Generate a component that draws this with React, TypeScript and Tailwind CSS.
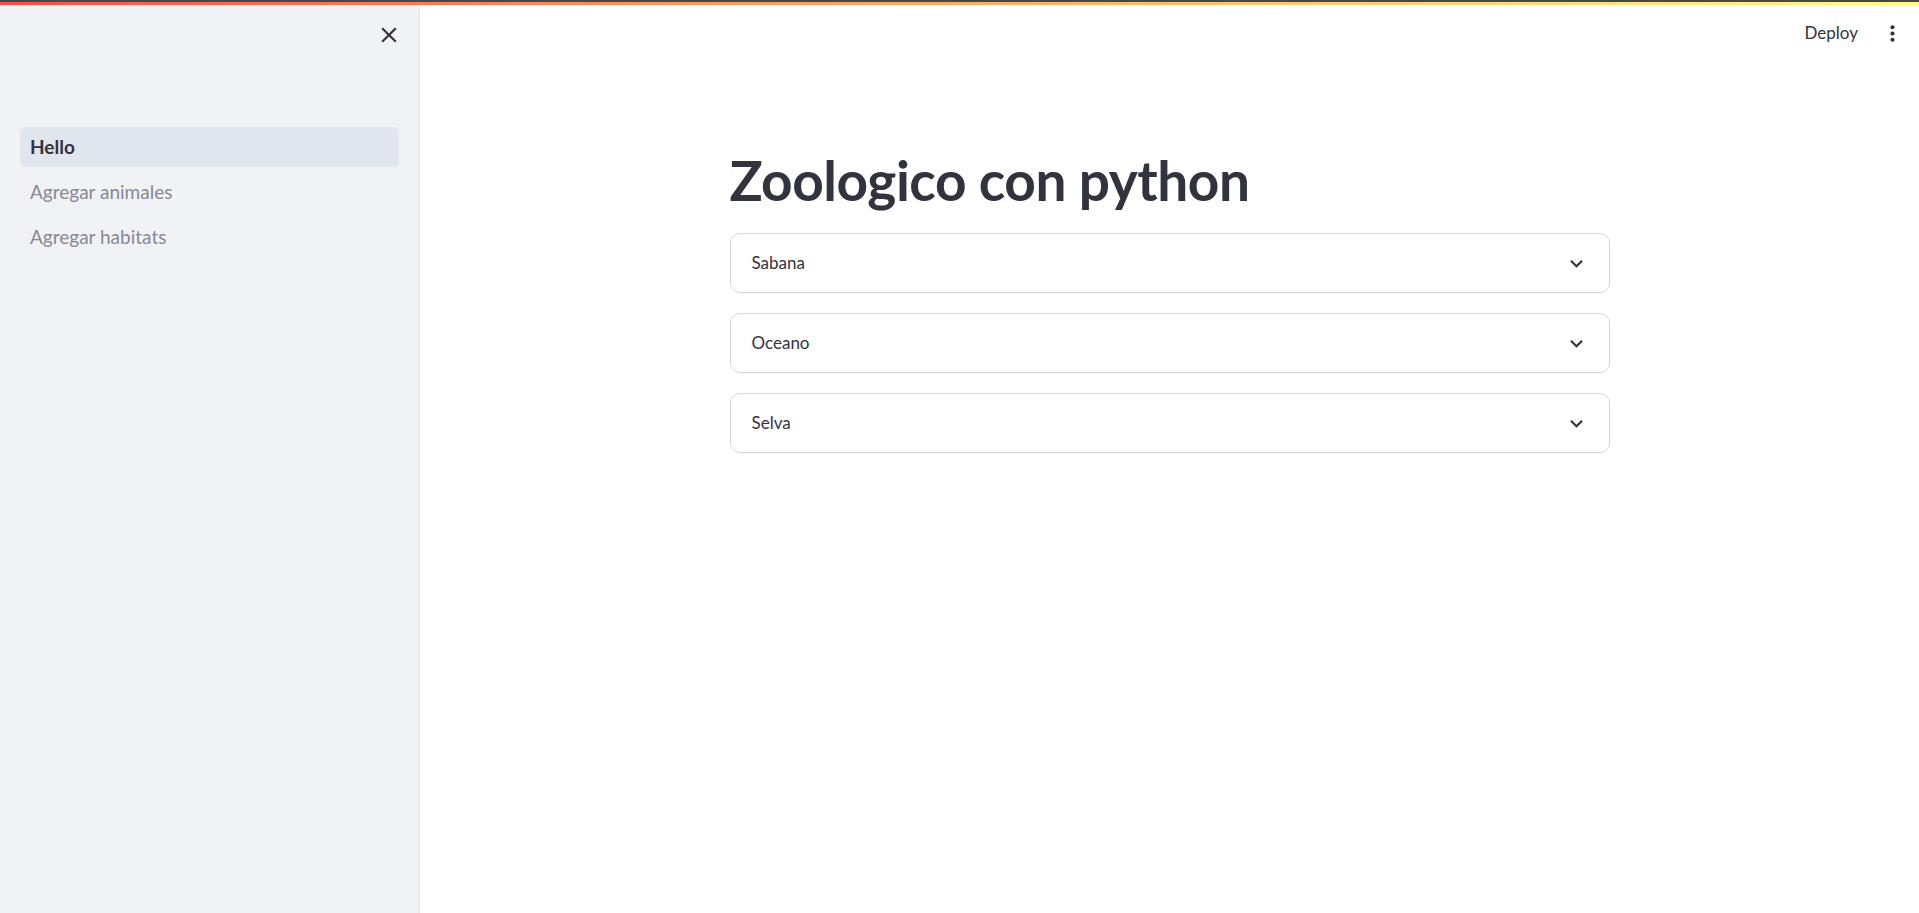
import type React from "react"

const Chevron: React.FC = () => (
  <svg viewBox="0 0 24 24" className="w-[25px] h-[25px] fill-[#31333f]">
    <path d="M16.59 8.59L12 13.17 7.41 8.59 6 10l6 6 6-6z" />
  </svg>
)

const habitats = ["Sabana", "Oceano", "Selva"]

const App: React.FC = () => {
  return (
    <div className="h-[913px] flex flex-col font-['Lato',sans-serif] text-[#31333f] overflow-hidden">
      <div className="h-[2px] bg-[#474747]" />
      <div className="h-[3px] bg-gradient-to-r from-[#ff4b4b] to-[#fffd80]" />
      <div className="flex flex-1 min-h-0">
        {/* sidebar */}
        <aside className="w-[420px] shrink-0 bg-[#f0f2f6] border-r border-[#e6e8ee] flex flex-col">
          <div className="flex justify-end pr-[17px] pt-[17px]">
            <svg viewBox="0 0 24 24" className="w-[26px] h-[26px] fill-[#31333f]">
              <path d="M19 6.41L17.59 5 12 10.59 6.41 5 5 6.41 10.59 12 5 17.59 6.41 19 12 13.41 17.59 19 19 17.59 13.41 12z" />
            </svg>
          </div>
          <nav className="mt-[79px] px-[20px] flex flex-col gap-[5px]">
            <div className="h-[40px] rounded-[6px] bg-[#e1e5ed] flex items-center px-[10px] text-[19px] font-bold text-[#31333f]">
              Hello
            </div>
            <div className="h-[40px] flex items-center px-[10px] text-[19px] text-[#878994]">
              Agregar animales
            </div>
            <div className="h-[40px] flex items-center px-[10px] text-[19px] text-[#878994]">
              Agregar habitats
            </div>
          </nav>
        </aside>

        {/* main */}
        <main className="flex-1 flex flex-col">
          <header className="h-[56px] flex items-center justify-end pr-[14px] gap-[22px]">
            <span className="text-[17px] text-[#31333f]">Deploy</span>
            <svg viewBox="0 0 24 24" className="w-[25px] h-[25px] fill-[#31333f]">
              <circle cx="12" cy="6" r="2" />
              <circle cx="12" cy="12" r="2" />
              <circle cx="12" cy="18" r="2" />
            </svg>
          </header>
          <div className="flex justify-center">
            <div className="w-[880px] pt-[86px]">
              <h1 className="text-[55px] leading-[66px] font-bold tracking-[-0.5px] mb-[20px]">Zoologico con python</h1>
              <div className="flex flex-col gap-[20px]">
                {habitats.map((h) => (
                  <div
                    key={h}
                    className="h-[60px] border border-[#d6d6d9] rounded-[10px] flex items-center justify-between pl-[21px] pr-[20px]"
                  >
                    <span className="text-[17px]">{h}</span>
                    <Chevron />
                  </div>
                ))}
              </div>
            </div>
          </div>
        </main>
      </div>
    </div>
  )
}

export default App
